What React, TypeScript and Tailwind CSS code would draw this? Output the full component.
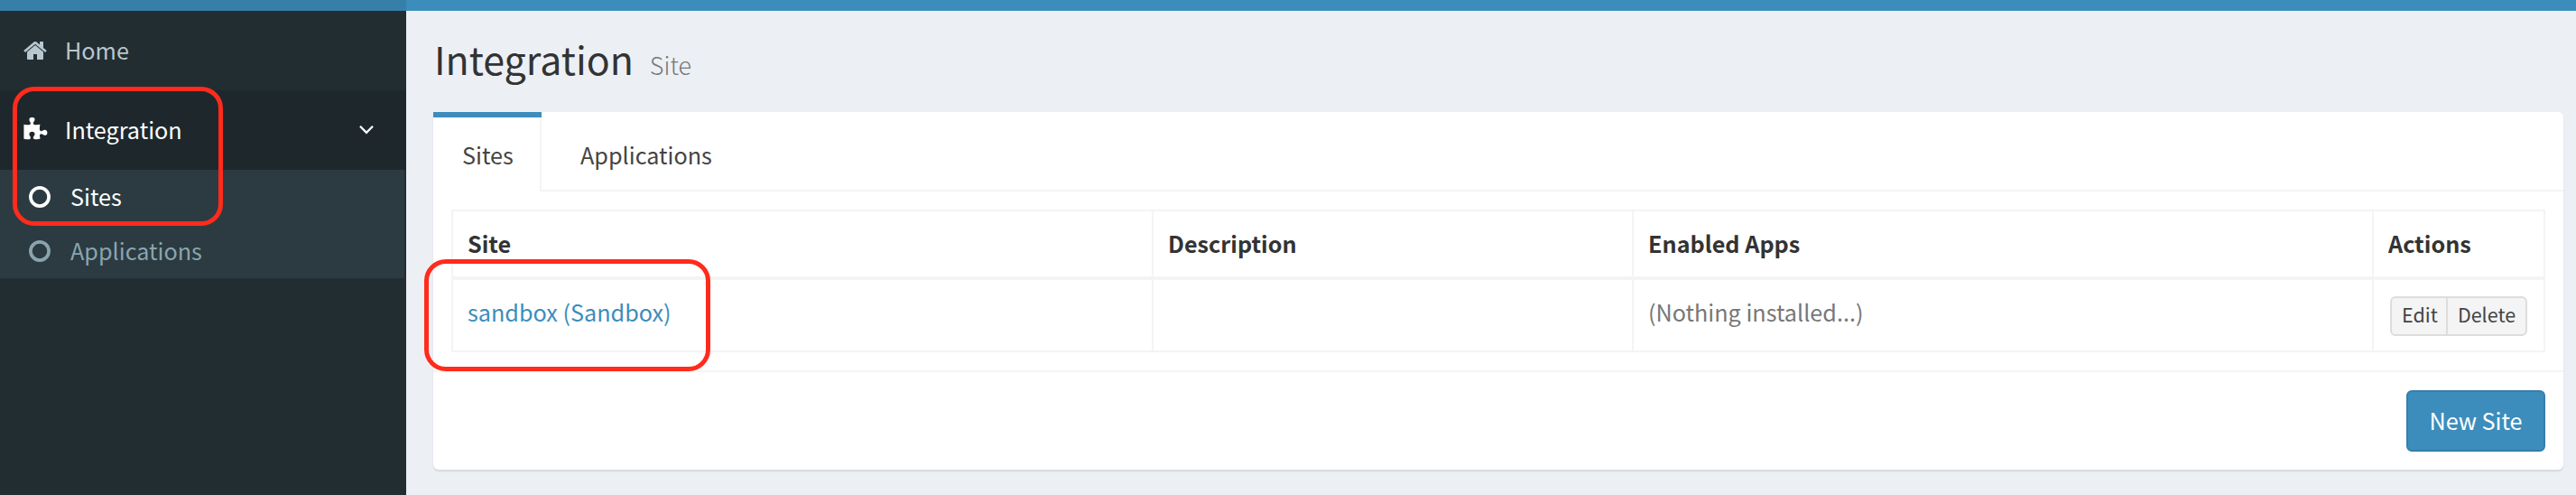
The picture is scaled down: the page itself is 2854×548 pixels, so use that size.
import React from "react";

function HomeIcon() {
  return (
    <svg viewBox="0 0 1792 1792" className="h-[28px] w-[28px] shrink-0 fill-current">
      <path d="M1472 992v480q0 26-19 45t-45 19h-384v-384h-256v384h-384q-26 0-45-19t-19-45v-480q0-1 .5-3t.5-3l575-474 575 474q1 2 1 6zm223-69l-62 74q-8 9-21 11h-3q-13 0-21-7l-692-577-692 577q-12 8-24 7-13-2-21-11l-62-74q-8-10-7-23.5t11-21.5l719-599q32-26 76-26t76 26l244 204v-195q0-14 9-23t23-9h192q14 0 23 9t9 23v408l219 182q10 8 11 21.5t-7 23.5z" />
    </svg>
  );
}

function PuzzleIcon() {
  return (
    <svg viewBox="0 0 1792 1792" className="h-[28px] w-[28px] shrink-0 fill-current">
      <path d="M1755 1082q0 81-44.5 135t-123.5 54q-41 0-77.5-17.5t-59-38-56.5-38-71-17.5q-110 0-110 124 0 39 16 115t15 115v5q-22 0-33 1-34 3-97.5 11.5t-115.5 13.5-98 5q-61 0-103-26.5t-42-83.5q0-37 17.5-71t38-56.5 38-59 17.5-77.5q0-79-54-123.5t-135-44.5q-84 0-143 45.5t-59 127.5q0 43 15 83t33.5 64.5 33.5 53 15 50.5q0 45-46 89-37 35-117 35-95 0-245-24-9-2-27.5-4t-27.5-4l-13-2q-1 0-3-1-2 0-2-1v-1024q2 1 17.5 3.5t34 5 21.5 3.5q150 24 245 24 80 0 117-35 46-44 46-89 0-22-15-50.5t-33.5-53-33.5-64.5-15-83q0-82 59-127.5t144-45.5q80 0 134 44.5t54 123.5q0 41-17.5 77.5t-38 59-38 56.5-17.5 71q0 57 42 83.5t103 26.5q64 0 180-15t163-17v2q-1 2-3.5 17.5t-5 34-3.5 21.5q-24 150-24 245 0 80 35 117 44 46 89 46 22 0 50.5-15t53-33.5 64.5-33.5 83-15q82 0 127.5 59t45.5 143z" />
    </svg>
  );
}

function RingIcon() {
  return (
    <svg viewBox="0 0 24 24" className="h-6 w-6 shrink-0 fill-none stroke-current">
      <circle cx="12" cy="12" r="10.1" strokeWidth="3.7" />
    </svg>
  );
}

function Sidebar() {
  return (
    <nav className="flex w-[450px] shrink-0 flex-col bg-[#222d32]">
      <a className="flex h-[88px] items-center pl-[25px] text-[#b8c7ce]">
        <HomeIcon />
        <span className="pb-[2px] pl-[19px]">Home</span>
      </a>
      <a className="flex h-[88px] items-center bg-[#1e282c] pl-[25px] text-white">
        <PuzzleIcon />
        <span className="grow pb-[2px] pl-[19px]">Integration</span>
        <svg viewBox="0 0 16 10" className="mr-[36px] h-[10px] w-[16px] fill-none stroke-current">
          <path d="M1 .8 8 7.9 15 .8" strokeWidth="2.3" />
        </svg>
      </a>
      <div className="mr-[2px] flex h-[120px] flex-col bg-[#2c3b41]">
        <a className="flex h-[60px] items-center pl-8 text-white">
          <RingIcon />
          <span className="pb-[2px] pl-[22px]">Sites</span>
        </a>
        <a className="flex h-[60px] items-center pl-8 text-[#8aa4af]">
          <RingIcon />
          <span className="pb-[2px] pl-[22px]">Applications</span>
        </a>
      </div>
    </nav>
  );
}

function Tabs() {
  return (
    <div className="flex h-[88px] text-[#444444]">
      <div className="flex w-[120px] flex-col">
        <div className="h-[6px] bg-[#3c8dbc]" />
        <div className="flex grow items-center border-r-2 border-[#f4f4f4] pl-8">Sites</div>
      </div>
      <div className="flex grow items-center border-b-2 border-[#f4f4f4] pt-[7px] pl-[43px]">Applications</div>
    </div>
  );
}

const th = "border-2 border-b-4 border-[#f4f4f4] px-4 pb-[3px] text-left font-bold";
const td = "border-2 border-[#f4f4f4] px-4 pb-[9px]";

function SiteTable() {
  return (
    <table className="w-[2320px] table-fixed border-collapse text-[#333333]">
      <colgroup>
        <col className="w-[776px]" />
        <col className="w-[532px]" />
        <col className="w-[820px]" />
        <col className="w-[190px]" />
      </colgroup>
      <thead>
        <tr className="h-[75px]">
          <th className={th}>Site</th>
          <th className={th}>Description</th>
          <th className={th}>Enabled Apps</th>
          <th className={th}>Actions</th>
        </tr>
      </thead>
      <tbody>
        <tr className="h-[81px]">
          <td className={td}>
            <a className="text-[#3c8dbc]">sandbox (Sandbox)</a>
          </td>
          <td className={td} />
          <td className={td}>
            <span className="text-[#777777]">(Nothing installed...)</span>
          </td>
          <td className="border-2 border-[#f4f4f4] pt-[2px] pl-[18px]">
            <div className="flex h-[44px] w-[152px] rounded-[6px] border-2 border-[#dddddd] bg-[#f4f4f4] text-[21.5px] leading-[36px] text-[#444444]">
              <button className="w-[62px] border-r-2 border-[#dddddd] pb-1 pl-[2px]">Edit</button>
              <button className="grow pb-1">Delete</button>
            </div>
          </td>
        </tr>
      </tbody>
    </table>
  );
}

export default function App() {
  return (
    <div className="relative flex h-[548px] w-[2854px] flex-col overflow-hidden bg-[#ecf0f5] font-['Noto_Sans_CJK_SC','Noto_Sans',sans-serif] text-[25.2px] leading-[40px]">
      <header className="flex h-3 shrink-0">
        <div className="w-[450px] bg-[#367fa9]" />
        <div className="grow bg-[#3c8dbc]" />
      </header>
      <div className="flex grow">
        <Sidebar />
        <main className="flex grow flex-col pl-[30px]">
          <div className="flex h-28 items-baseline pt-[25px]">
            <h1 className="pl-px text-[42.9px] leading-[54px] text-[#333333]">Integration</h1>
            <small className="pl-[18px] text-[27px] font-light text-[#777777]">Site</small>
          </div>
          <section className="flex h-[396px] w-[2360px] flex-col rounded-[6px] rounded-tl-none bg-white shadow-[0_2px_2px_rgba(0,0,0,0.1)]">
            <Tabs />
            <div className="px-5 pt-5">
              <SiteTable />
            </div>
            <footer className="mt-auto flex h-[110px] justify-end border-t-2 border-[#f4f4f4] px-5 pt-5">
              <button className="h-[68px] w-[154px] rounded-[6px] border-2 border-[#367fa9] bg-[#3c8dbc] pb-[2px] text-white">New Site</button>
            </footer>
          </section>
        </main>
      </div>
      <div className="absolute top-[96px] left-[14px] h-[154px] w-[233px] rounded-[24px] border-5 border-[#ff2b1c]" />
      <div className="absolute top-[287px] left-[470px] h-[124px] w-[317px] rounded-[24px] border-5 border-[#ff2b1c]" />
    </div>
  );
}
